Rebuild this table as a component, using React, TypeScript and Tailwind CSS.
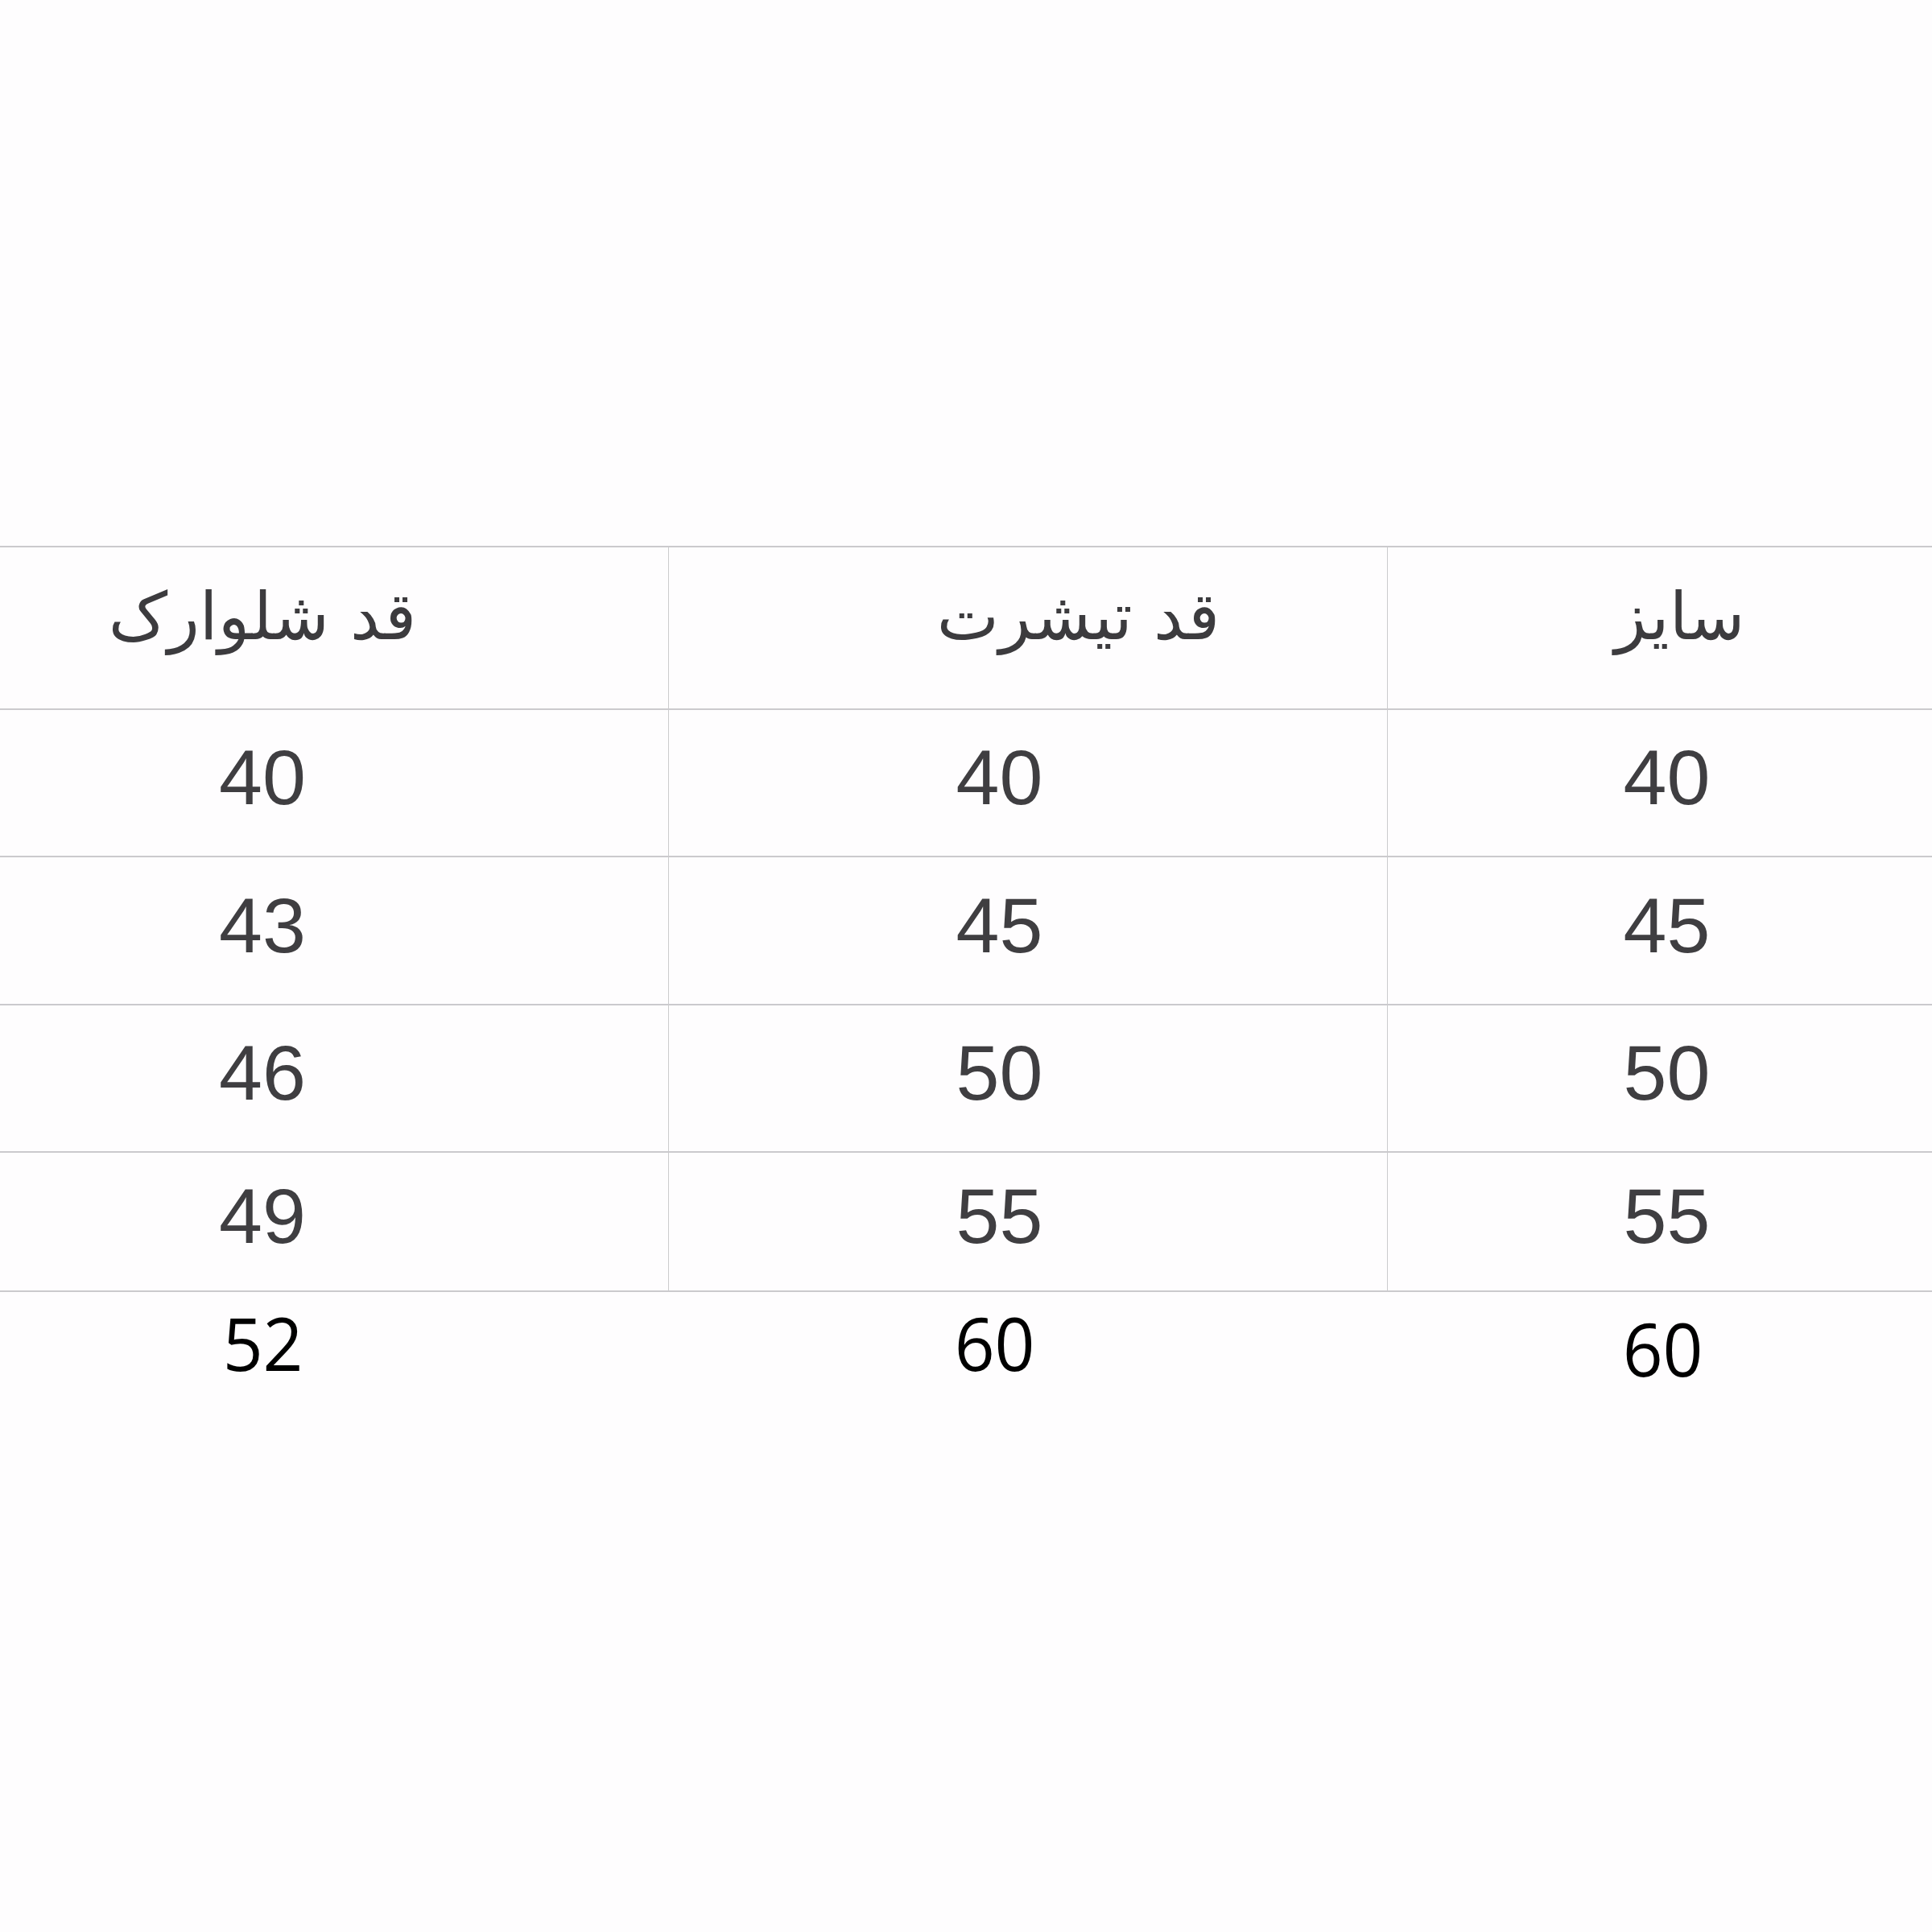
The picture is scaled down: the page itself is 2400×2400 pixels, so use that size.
const columns = [
  {
    title: "سایز",
    width: "border-l border-l-[#cbcbcd]",
    head: "pl-[49px]",
    cell: "pl-[17px]",
    last: "pl-[9px] pt-[14px]",
  },
  {
    title: "قد تیشرت",
    width: "border-l border-l-[#cbcbcd]",
    head: "pl-[125px]",
    cell: "pr-[71px]",
    last: "pr-[81px]",
  },
  {
    title: "قد شلوارک",
    width: "",
    head: "pr-[178px]",
    cell: "pr-[178px]",
    last: "pr-[176px]",
  },
]

const rows = [
  { h: "h-[183px]", values: ["40", "40", "40"] },
  { h: "h-[184px]", values: ["45", "45", "43"] },
  { h: "h-[183px]", values: ["50", "50", "46"] },
  { h: "h-[173px]", values: ["55", "55", "49"] },
]

const lastRow = ["60", "60", "52"]

export default function App() {
  return (
    <div className="w-[2400px] h-[2400px] bg-[#fefdfe] pt-[678px] overflow-hidden">
      <div dir="rtl" className="w-[2400px]">
        <div className="grid grid-cols-[677px_893px_830px] h-[204px] border-y-2 border-[#cbcacd]">
          {columns.map((col) => (
            <div
              key={col.title}
              className={`flex items-center justify-center pb-[30px] ${col.width} ${col.head}`}
            >
              <span className="text-[82px] font-medium text-[#3c3b3e] font-['DejaVu_Sans',sans-serif]">
                {col.title}
              </span>
            </div>
          ))}
        </div>

        {rows.map((row, r) => (
          <div
            key={r}
            className={`grid grid-cols-[677px_893px_830px] border-b-2 border-[#cbcacd] ${row.h}`}
          >
            {row.values.map((v, i) => (
              <div
                key={i}
                className={`flex items-center justify-center pb-[14px] ${columns[i].width} ${columns[i].cell}`}
              >
                <span className="text-[97px] leading-none text-[#3f3e41] font-['Liberation_Sans',Arial,sans-serif]">
                  {v}
                </span>
              </div>
            ))}
          </div>
        ))}

        <div className="grid grid-cols-[677px_893px_830px] h-[126px]">
          {lastRow.map((v, i) => (
            <div key={i} className={`flex items-center justify-center ${columns[i].last}`}>
              <span className="text-[92px] leading-none text-black font-['Open_Sans',sans-serif] scale-x-95">
                {v}
              </span>
            </div>
          ))}
        </div>
      </div>
    </div>
  )
}
